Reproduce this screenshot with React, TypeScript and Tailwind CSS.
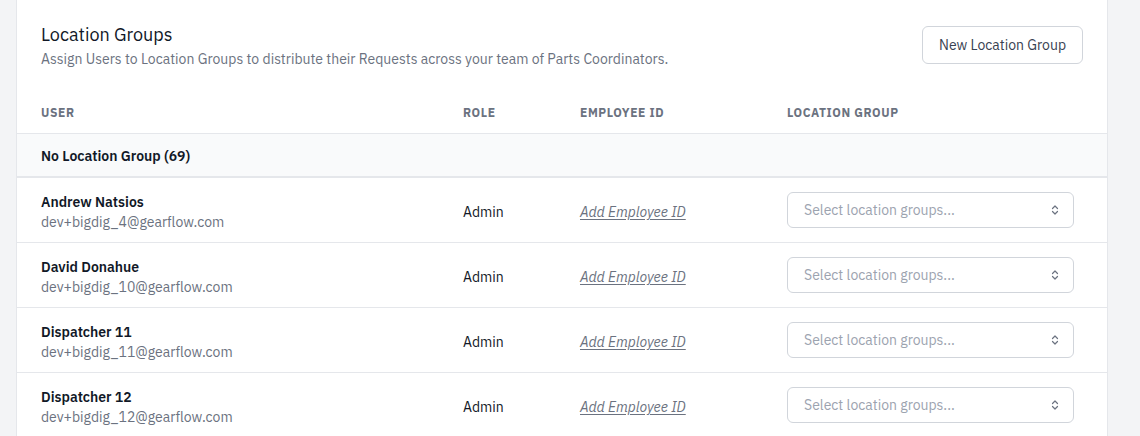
import React from "react";

const font = { fontFamily: '"IBM Plex Sans", "Liberation Sans", Arial, sans-serif' };

const users = [
  { name: "Andrew Natsios", email: "dev+bigdig_4@gearflow.com" },
  { name: "David Donahue", email: "dev+bigdig_10@gearflow.com" },
  { name: "Dispatcher 11", email: "dev+bigdig_11@gearflow.com" },
  { name: "Dispatcher 12", email: "dev+bigdig_12@gearflow.com" },
];

function UpDown() {
  return (
    <svg width="12" height="14" viewBox="0 0 12 14" fill="none" stroke="#6b7280" strokeWidth="1.2" strokeLinecap="round" strokeLinejoin="round">
      <path d="M3.5 5.5 L6 3 L8.5 5.5" />
      <path d="M3.5 8.5 L6 11 L8.5 8.5" />
    </svg>
  );
}

export default function App() {
  return (
    <div className="w-[1140px] h-[436px] overflow-hidden bg-[#f3f4f6]" style={font}>
      <div className="ml-4 w-[1092px] h-[436px] bg-white border-x border-[#e5e7eb]">
        <div className="flex items-center justify-between pl-6 pr-6 pt-[21px]">
          <div>
            <h1 className="text-[18px] leading-7 text-[#111827]">Location Groups</h1>
            <p className="text-sm leading-5 text-[#6b7280]">
              Assign Users to Location Groups to distribute their Requests across your team of Parts Coordinators.
            </p>
          </div>
          <button className="h-[38px] w-[161px] rounded-md border border-[#d1d5db] bg-white text-sm text-[#374151]">
            New Location Group
          </button>
        </div>

        <div className="mt-6 grid grid-cols-[422px_117px_207px_1fr] h-10 items-center text-xs font-bold tracking-wider uppercase text-[#6b7280]">
          <div className="pl-6">User</div>
          <div className="pl-6">Role</div>
          <div className="pl-6">Employee ID</div>
          <div className="pl-6">Location Group</div>
        </div>

        <div className="h-[45px] flex items-center pl-6 pt-[2px] bg-[#f9fafb] border-t border-b-2 border-[#e5e7eb] text-sm font-semibold text-[#111827]">
          No Location Group (69)
        </div>

        {users.map((u) => (
          <div key={u.email} className="grid grid-cols-[422px_117px_207px_1fr] h-[65px] items-center border-b border-[#e5e7eb]">
            <div className="pl-6 pt-[4px]">
              <div className="text-sm leading-5 font-semibold text-[#111827]">{u.name}</div>
              <div className="text-sm leading-5 text-[#6b7280]">{u.email}</div>
            </div>
            <div className="pl-6 pt-[4px] text-sm text-[#111827]">Admin</div>
            <div className="pl-6 pt-[4px] text-sm italic underline underline-offset-2 text-[#6b7280]">Add Employee ID</div>
            <div className="pl-6">
              <div className="w-[287px] h-9 rounded-md border border-[#d1d5db] flex items-center justify-between pl-4 pr-3 text-sm text-[#9ca3af]">
                <span>Select location groups...</span>
                <UpDown />
              </div>
            </div>
          </div>
        ))}
      </div>
    </div>
  );
}
